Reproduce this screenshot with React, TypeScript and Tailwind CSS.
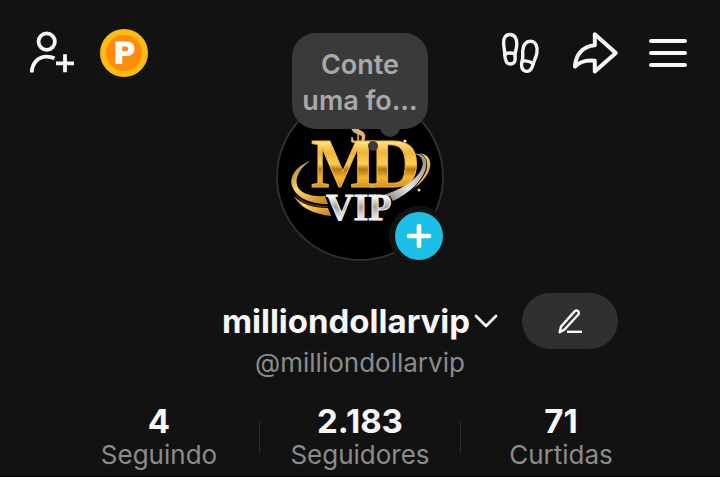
import type { ButtonHTMLAttributes } from "react";
import { clsx } from "clsx";

type Stat = {
  value: string;
  label: string;
};

const stats: Stat[] = [
  { value: "4", label: "Seguindo" },
  { value: "2.183", label: "Seguidores" },
  { value: "71", label: "Curtidas" },
];

function IconButton({ className, children, ...props }: ButtonHTMLAttributes<HTMLButtonElement>) {
  return (
    <button type="button" {...props} className={clsx("size-12 shrink-0 rounded-full", className)}>
      {children}
    </button>
  );
}

function AddFriendIcon() {
  return (
    <svg viewBox="0 0 48 48" fill="none" stroke="currentColor" strokeWidth="3.8" className="size-12">
      <circle cx="18.7" cy="12.6" r="8.2" />
      <path d="M3.8 43.5C4 33.5 10.5 27.6 18.7 27.6c3 0 5.500.6 7.800 1.700" />
      <path d="M28 34.300h18M37 25.300v18" />
    </svg>
  );
}

function CoinIcon() {
  return (
    <svg viewBox="0 0 48 48" className="size-12">
      <circle cx="24" cy="24" r="24" fill="#fdbc11" />
      <circle cx="24" cy="24" r="18" fill="#fe8c0c" />
      <path
        fill="#fff"
        fillRule="evenodd"
        d="M15.500 12.500h11.500c4.500 0 7.500 3 7.500 7.200s-3 7.300-7.500 7.300h-4.800v8h-6.700zM22.200 17.500v4.700h3.500c1.600 0 2.500-.9 2.500-2.300s-.9-2.400-2.500-2.400z"
      />
    </svg>
  );
}

function FootprintsIcon() {
  return (
    <svg
      viewBox="0 0 48 48"
      fill="none"
      stroke="currentColor"
      strokeWidth="3.400"
      strokeLinecap="round"
      strokeLinejoin="round"
      className="size-12"
    >
      <path d="M10 5.500C5.500 5.500 3.500 9 3.600 14c.1 4 1 7 1.200 11 .1 5.500 1 10 5.500 10 4 0 5.200-3 4.800-6.500-.5-4.500.8-6.500 1.400-10.500C17.500 11 15.500 5.500 10 5.500z" />
      <path d="M4.800 25.200c3.500-1.600 6.500-1.600 10-.4" />
      <path d="M31.500 12.400c-5.500-.7-8.500 3.600-8.800 9.600-.2 4 .8 5.500-.6 10-1.200 4-.8 9 3.400 10.200 4.500 1 6.500-2.500 7.700-7.200 1-4 3-6.500 3.700-11 .9-6-.9-11-5.400-11.600z" />
      <path d="M22.300 32.200c3.500-.7 7-.1 10.300 2" />
    </svg>
  );
}

function ShareIcon() {
  return (
    <svg
      viewBox="0 0 48 48"
      fill="none"
      stroke="currentColor"
      strokeWidth="4"
      strokeLinejoin="round"
      className="size-12"
    >
      <path d="M22.800 5.200 43.800 24 22.800 42.400V31.800C14 30.800 7.500 33 3 37.500 3.700 25.500 11 17.200 22.800 16.200z" />
    </svg>
  );
}

function MenuIcon() {
  return (
    <svg
      viewBox="0 0 48 48"
      fill="none"
      stroke="currentColor"
      strokeWidth="4"
      strokeLinecap="round"
      className="size-12"
    >
      <path d="M7 12h34M7 24h34M7 36h34" />
    </svg>
  );
}

function PencilIcon() {
  return (
    <svg
      viewBox="0 0 28 28"
      fill="none"
      stroke="currentColor"
      strokeWidth="2.4"
      strokeLinejoin="round"
      className="size-7"
    >
      <path d="M3.600 25.200 5 19.600 18.600 4.400c1-1 2.500-1.100 3.500-.2s1 2.400 0 3.500L8.400 22.600z" />
      <path d="M11 24.800H26" />
    </svg>
  );
}

function Emblem() {
  return (
    <svg viewBox="2 2 164 164" className="size-full">
      <defs>
        <linearGradient id="gold" x1="0" y1="0" x2="0" y2="1">
          <stop offset="0.200" stopColor="#ffe684" />
          <stop offset="0.350" stopColor="#f0b43a" />
          <stop offset="0.500" stopColor="#ffcf55" />
          <stop offset="0.570" stopColor="#b87413" />
          <stop offset="0.680" stopColor="#f5b52c" />
          <stop offset="0.820" stopColor="#d18a18" />
        </linearGradient>
        <linearGradient id="silver" x1="0" y1="0" x2="0" y2="1">
          <stop offset="0.250" stopColor="#ffffff" />
          <stop offset="0.500" stopColor="#a2a2a6" />
          <stop offset="0.800" stopColor="#f4f4f6" />
        </linearGradient>
        <linearGradient id="band" x1="0" y1="0" x2="1" y2="1">
          <stop offset="0" stopColor="#8d6a2c" />
          <stop offset="0.400" stopColor="#ffd666" />
          <stop offset="1" stopColor="#c47f12" />
        </linearGradient>
        <linearGradient id="steel" x1="0" y1="1" x2="1" y2="0">
          <stop offset="0" stopColor="#5c5c60" />
          <stop offset="0.450" stopColor="#e6e6e8" />
          <stop offset="1" stopColor="#8f8578" />
        </linearGradient>
      </defs>
      <path fill="url(#band)" d="M34 68C20 73 13 84 16 93c4 11 17 18 36 18l-3-8c-14 1-26-3-28-11-2-8 3-17 13-24z" />
      <path fill="url(#band)" d="M17 102c6 12 20 19 38 21l-3-8C36 115 25 111 17 102z" />
      <path fill="#5a3205" d="M17 98c6 10 18 15 35 15v1c-16 1-30-4-35-16z" />
      <path fill="url(#band)" d="M143 60c11 1 14 10 9 20-3 6-8 11-14 15 6-7 12-13 13-21 1-7-2-12-8-14z" />
      <path fill="url(#steel)" d="M138 61c11-2 15 7 11 17-5 12-17 23-32 30l-3-5c-5 1-9 1-14 1 20-5 38-14 45-27 4-8 1-15-7-16z" />
      <g fontFamily="Liberation Serif, serif" fontWeight="700">
        <text x="74" y="50" fontSize="32" fill="#dcb57c">
          $
        </text>
        <g fontSize="69" fill="url(#gold)" stroke="#f0b73c" strokeWidth="1">
          <text x="35" y="94">
            M
          </text>
          <text x="94" y="94">
            D
          </text>
        </g>
        <text x="50" y="127" fontSize="38" fill="url(#silver)" stroke="#f0f0f2" strokeWidth="1">
          VIP
        </text>
      </g>
      <circle cx="97" cy="53" r="5" fill="#3a3a3a" />
      <circle cx="129" cy="48" r="1.500" fill="#fff3c0" />
      <circle cx="143" cy="97" r="1.500" fill="#ffd873" />
    </svg>
  );
}

function ProfilePhoto() {
  return (
    <div className="flex flex-col items-center">
      <button
        type="button"
        className="relative z-10 mt-[33px] w-34 rounded-3xl bg-[#3a3a3a] pt-[14px] pb-[10px] text-center text-[27px] leading-9 font-semibold text-[#a9a9a9]"
      >
        Conte
        <br />
        uma fo…
        <span className="absolute -bottom-2 left-22 -z-10 size-5 rounded-full bg-[#3a3a3a]" />
      </button>
      <div className="relative -mt-9 size-42">
        <div className="size-full overflow-hidden rounded-full border-2 border-[#2e2e30] bg-black">
          <Emblem />
        </div>
        <button
          type="button"
          aria-label="Adicionar foto"
          className="absolute right-px bottom-px flex size-12 items-center justify-center rounded-full bg-[#1cbfe5] text-white ring-6 ring-[#121212]"
        >
          <svg viewBox="0 0 26 26" fill="none" stroke="currentColor" strokeWidth="4.600" strokeLinecap="round" className="size-[26px]">
            <path d="M3 13h20M13 3v20" />
          </svg>
        </button>
      </div>
    </div>
  );
}

export default function App() {
  return (
    <main className="min-h-screen border-b border-black bg-[#121212] font-['Inter',sans-serif] text-[#f6f6f6]">
      <header className="grid grid-cols-[1fr_auto_1fr] items-start">
        <div className="flex gap-6 pt-[29px] pl-7">
          <IconButton aria-label="Adicionar amigos">
            <AddFriendIcon />
          </IconButton>
          <IconButton aria-label="Pontos">
            <CoinIcon />
          </IconButton>
        </div>
        <ProfilePhoto />
        <div className="flex justify-end gap-6 pt-[29px] pr-7">
          <IconButton aria-label="Visitas ao perfil">
            <FootprintsIcon />
          </IconButton>
          <IconButton aria-label="Compartilhar">
            <ShareIcon />
          </IconButton>
          <IconButton aria-label="Menu">
            <MenuIcon />
          </IconButton>
        </div>
      </header>

      <section className="mt-8">
        <div className="grid grid-cols-[1fr_auto_1fr] items-center">
          <h1 className="col-start-2 text-[33px] leading-10 font-bold">
            <button type="button" className="flex items-center gap-1">
              milliondollarvip
              <svg
                viewBox="0 0 24 24"
                fill="none"
                stroke="currentColor"
                strokeWidth="2.800"
                strokeLinecap="round"
                strokeLinejoin="round"
                className="size-6"
              >
                <path d="m2 7 10 10L22 7" />
              </svg>
            </button>
          </h1>
          <button
            type="button"
            aria-label="Editar perfil"
            className="ml-6 flex h-14 w-24 items-center justify-center rounded-full bg-[#303030]"
          >
            <PencilIcon />
          </button>
        </div>
        <p className="text-center text-[26px] leading-7 text-[#8c8c8c]">@milliondollarvip</p>
      </section>

      <dl className="mt-[26px] flex items-center justify-center">
        {stats.map((stat, i) => (
          <div key={stat.label} className="flex items-center">
            {i > 0 && <span className="h-8 w-px bg-[#2c2c2c]" />}
            <div className="flex w-50 flex-col-reverse text-center">
              <dt className="text-[26px] leading-8 text-[#8c8c8c]">{stat.label}</dt>
              <dd className="text-[33px] leading-9 font-bold">{stat.value}</dd>
            </div>
          </div>
        ))}
      </dl>
    </main>
  );
}
